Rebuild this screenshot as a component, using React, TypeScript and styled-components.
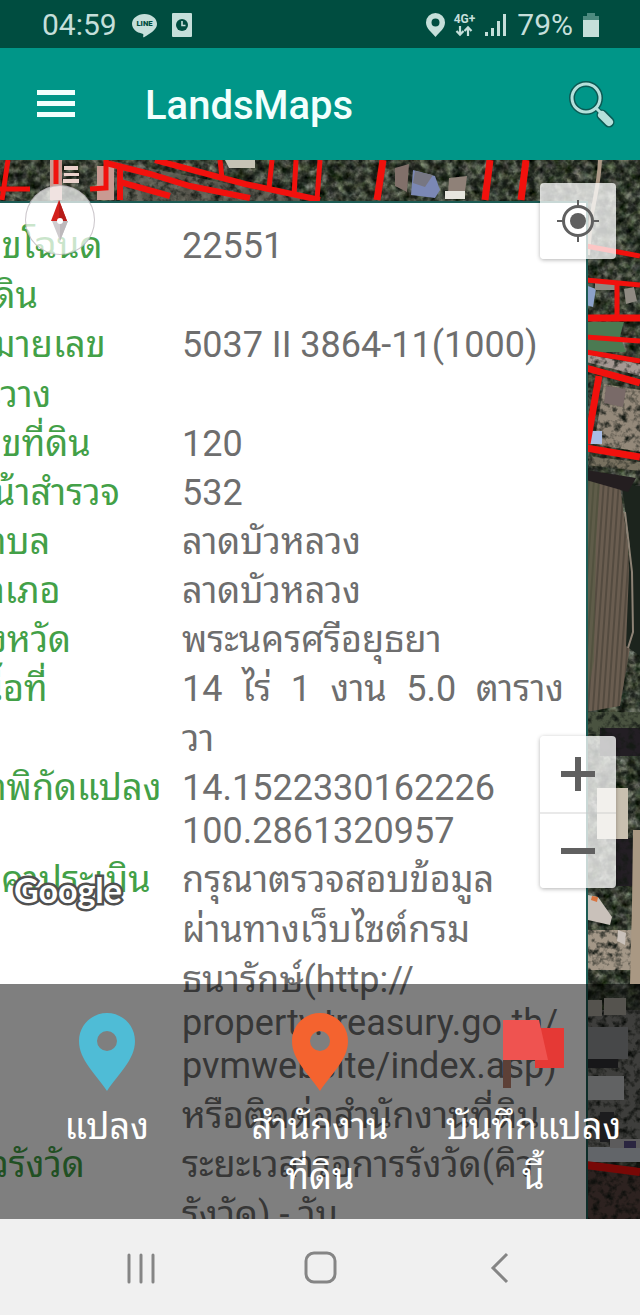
import React from 'react';
import styled, { createGlobalStyle } from 'styled-components';

const GlobalStyle = createGlobalStyle`
  *, *::before, *::after { box-sizing: border-box; }
  body {
    margin: 0;
    background: #f0f0f0;
    font-family: Roboto, 'Noto Sans Thai Looped', sans-serif;
  }
  button { font: inherit; color: inherit; border: 0; padding: 0; background: none; cursor: pointer; }
`;

const Screen = styled.div`
  display: flex;
  flex-direction: column;
  min-height: 100vh;
`;

/* ---------- status bar ---------- */

const StatusBar = styled.header`
  display: flex;
  align-items: center;
  justify-content: space-between;
  height: 48px;
  padding: 0 40px 0 42px;
  background: #004d40;
  color: #c5dfda;
  font-size: 30px;
  line-height: 48px;
`;

const StatusGroup = styled.div<{ $gap: number }>`
  display: flex;
  align-items: center;
  gap: ${({ $gap }) => $gap}px;
  padding-top: 2px;
`;

const StatusText = styled.span`
  line-height: 40px;
`;

const Network = styled.span`
  display: flex;
  flex-direction: column;
  align-items: center;
  font-size: 12px;
  line-height: 12px;
  font-weight: 700;
`;

/* ---------- toolbar ---------- */

const Toolbar = styled.div`
  display: flex;
  align-items: center;
  height: 112px;
  padding: 0 24px 0 36px;
  background: #009688;
  color: #f2fffd;
`;

const ToolbarButton = styled.button`
  display: flex;
  width: 48px;
  height: 48px;
  align-items: center;
`;

const Title = styled.h1`
  flex: 1;
  margin: 0;
  padding: 4px 0 0 61px;
  font-size: 40px;
  line-height: 48px;
  font-weight: 500;
`;

/* ---------- map ---------- */

const MapArea = styled.main`
  position: relative;
  flex: 1;
  overflow: hidden;
  background: #2e332b;
`;

const Satellite = styled.svg`
  position: absolute;
  inset: 0;
  width: 100%;
  height: 100%;
`;

const InfoPanel = styled.section`
  position: absolute;
  top: 41px;
  bottom: -40px;
  left: -33px;
  right: 52px;
  padding-top: 16px;
  overflow: hidden;
  background: #fff;
  border: 2px solid #1d5c55;
`;

const DetailTable = styled.table`
  width: 100%;
  border-collapse: collapse;
  table-layout: fixed;
  font-size: 36px;
  line-height: 43px;
`;

const Label = styled.th`
  width: 213px;
  padding: 0;
  vertical-align: top;
  text-align: left;
  font-weight: 400;
  color: #43a047;
`;

const Value = styled.td`
  padding: 0 22px 0 0;
  vertical-align: top;
  color: #6e6e6e;
`;

const Line = styled.span<{ $latin?: boolean; $justify?: boolean }>`
  display: block;
  padding-top: ${({ $latin }) => ($latin ? 0 : 7)}px;
  white-space: nowrap;
  text-align-last: ${({ $justify }) => ($justify ? 'justify' : 'left')};
  &:first-child { padding-top: 6px; }
`;

const Compass = styled.button`
  position: absolute;
  top: 25px;
  left: 25px;
  width: 70px;
  height: 70px;
  border: 1px solid rgba(150, 140, 150, 0.5);
  border-radius: 50%;
  background: rgba(255, 255, 255, 0.72);
  display: grid;
  place-items: center;
`;

const Watermark = styled.span`
  position: absolute;
  left: 14px;
  bottom: 309px;
  font: 700 34px/40px Lato, sans-serif;
  color: #fff;
  -webkit-text-stroke: 5px rgb(80, 80, 80);
  stroke-linejoin: round;
  paint-order: stroke fill;
`;

const ControlGroup = styled.div<{ $anchor: 'top' | 'bottom' }>`
  position: absolute;
  right: 24px;
  ${({ $anchor }) => ($anchor === 'top' ? 'top: 23px;' : 'bottom: 331px;')}
  display: flex;
  flex-direction: column;
  border-radius: 4px;
  background: rgba(255, 255, 255, 0.76);
  box-shadow: 0 1px 4px rgba(0, 0, 0, 0.3);
`;

const ControlButton = styled.button`
  display: grid;
  place-items: center;
  width: 76px;
  height: 76px;
  & + & { border-top: 2px solid rgba(200, 200, 200, 0.4); }
`;

const ActionBar = styled.nav`
  position: absolute;
  left: 0;
  right: 0;
  bottom: 0;
  display: grid;
  grid-template-columns: repeat(3, 1fr);
  height: 235px;
  background: rgba(0, 0, 0, 0.5);
`;

const Action = styled.button`
  display: flex;
  flex-direction: column;
  align-items: center;
  justify-content: flex-start;
  gap: 11px;
  padding-top: 29px;
  color: #fff;
  font-size: 36px;
  line-height: 50px;
  white-space: nowrap;
`;

/* ---------- system navigation ---------- */

const SystemNav = styled.footer`
  display: grid;
  grid-template-columns: repeat(3, 1fr);
  height: 96px;
  padding: 2px 52px 0;
  background: #f0f0f0;
`;

const SystemButton = styled.button`
  display: grid;
  place-items: center;
`;

type TextLine = { text: string; latin?: boolean; justify?: boolean };
type Detail = { label: string[]; value: TextLine[] };

const details: Detail[] = [
  { label: ['เลขโฉนด', 'ที่ดิน'], value: [{ text: '22551' }] },
  { label: ['หมายเลข', 'ระวาง'], value: [{ text: '5037 II 3864-11(1000)' }] },
  { label: ['เลขที่ดิน'], value: [{ text: '120' }] },
  { label: ['หน้าสำรวจ'], value: [{ text: '532' }] },
  { label: ['ตำบล'], value: [{ text: 'ลาดบัวหลวง' }] },
  { label: ['อำเภอ'], value: [{ text: 'ลาดบัวหลวง' }] },
  { label: ['จังหวัด'], value: [{ text: 'พระนครศรีอยุธยา' }] },
  { label: ['เนื้อที่'], value: [{ text: '14 ไร่ 1 งาน 5.0 ตาราง', justify: true }, { text: 'วา' }] },
  { label: ['ค่าพิกัดแปลง'], value: [{ text: '14.1522330162226' }, { text: '100.2861320957', latin: true }] },
  {
    label: ['ราคาประเมิน'],
    value: [
      { text: 'กรุณาตรวจสอบข้อมูล' },
      { text: 'ผ่านทางเว็บไซต์กรม' },
      { text: 'ธนารักษ์(http://' },
      { text: 'property.treasury.go.th/', latin: true },
      { text: 'pvmwebsite/index.asp)', latin: true },
      { text: 'หรือติดต่อสำนักงานที่ดิน' },
    ],
  },
  { label: ['คิวรังวัด'], value: [{ text: 'ระยะเวลารอการรังวัด(คิว' }, { text: 'รังวัด) - วัน' }] },
];

function SatelliteImage() {
  return (
    <Satellite viewBox="0 160 640 1059" preserveAspectRatio="xMaxYMin slice" aria-hidden="true">
      <defs>
        <filter id="ground" x="0" y="0" width="100%" height="100%" colorInterpolationFilters="sRGB">
          <feTurbulence type="fractalNoise" baseFrequency="0.11" numOctaves="3" seed="8" />
          <feColorMatrix values=".8 0 0 0 -.15  .78 .1 0 0 -.16  .75 0 .1 0 -.2  0 0 0 0 1" />
        </filter>
        <filter id="grain" x="0" y="0" width="100%" height="100%" colorInterpolationFilters="sRGB">
          <feTurbulence type="fractalNoise" baseFrequency="0.14" numOctaves="3" seed="21" />
          <feColorMatrix values="0 0 0 0 .08  0 0 0 0 .1  0 0 0 0 .08  2.6 0 0 0 -1.15" />
        </filter>
        <pattern id="furrows" width="5" height="8" patternUnits="userSpaceOnUse" patternTransform="rotate(4)">
          <rect width="5" height="8" fill="#6a5d50" />
          <rect width="2" height="8" fill="#544b40" />
        </pattern>
      </defs>
      <rect y="160" width="640" height="1059" filter="url(#ground)" />

      {/* open ground */}
      <path d="M108 160L300 198V202H120Z" fill="#6a655c" opacity=".7" />
      <path d="M586 354l54 10v12l-54-14z" fill="#a59893" />
      <path d="M604 384l36 6v62l-46-8z" fill="#94897a" />
      <path d="M586 456l54 6v9l-54-6z" fill="#77705f" />
      <path d="M586 712h54v22h-54z" fill="#4a5340" />
      <path d="M600 728h40v28h-40zM616 838h20v48h-20z" fill="#231e24" />
      <path d="M586 930h46v40h-46z" fill="#a39787" />
      <path d="M586 1010h54v140h-54z" fill="#7d7d78" />
      <path d="M586 1166h54v53h-54z" fill="#5a4540" />
      <rect x="0" y="160" width="640" height="1059" filter="url(#grain)" />

      {/* fields */}
      <path d="M586 322h38l-4 14 6 16h-40z" fill="#4b7a52" />
      <path d="M586 478l34 8 8 60 4 90-12 70-34 6z" fill="url(#furrows)" />
      <path d="M586 478l14 3-4 60-2 120-8 40z" fill="#4f5c3f" opacity=".4" />
      <path d="M622 486h18v170l-14-10 4-100z" fill="#1c241d" />
      <path d="M586 470l50 8-8 14-42-12z" fill="#241e20" />
      <path d="M625 512l7 60 1 60-5 16" fill="none" stroke="#8d8275" strokeWidth="2" />

      {/* roofs and roads */}
      <path d="M50 160h12v40H50zM97 166h17v34H97z" fill="#c99a92" />
      <path d="M64 166h14v4H64zM64 173h15v3H64zM63 179h16v4H63z" fill="#ead2cc" />
      <path d="M225 160h30v8h-26z" fill="#c6c3b5" />
      <path d="M395 168l14-4-2 28-12-6z" fill="#81706a" />
      <path d="M413 170l22 6 5 14-5 8-24-3z" fill="#7b88b5" />
      <path d="M415 171l18 4-8 12-12-4z" fill="#777783" />
      <path d="M449 178l18-2-2 16-17 2z" fill="#8f8178" />
      <path d="M445 191h20v8h-20z" fill="#e7e6df" />
      <path d="M600 160c-1 25-6 40-9 60l-3 35" fill="none" stroke="#ad9a87" strokeWidth="4" />
      <path d="M588 286l8 3-3 18-7-2z" fill="#8ca2ca" />
      <path d="M595 282h20v8h-20zM624 289l10-2 3 14-11 3z" fill="#8f8a82" />
      <path d="M606 386l20 3-3 18-19-4z" fill="#796a68" />
      <path d="M590 431h12v13h-12z" fill="#a9bde6" />
      <path d="M597 788h31v51h-31z" fill="#c9c0b0" />
      <path d="M633 830h7v154h-10l2-80z" fill="#a99883" />
      <path d="M588 895l10 2 14 20-2 8-22-5zM618 930l8 3-1 12-8-4z" fill="#c9c1ba" />
      <path d="M592 896l6 1-1 5-6-2z" fill="#d9743f" />
      <path d="M588 1000h14v16h-14zM604 998h22v17h-22z" fill="#aaa79c" />
      <path d="M588 1027h40v32h-40z" fill="#8f9092" />
      <path d="M588 1059h30v9h-30z" fill="#2e2e33" />
      <path d="M586 1076h38v24h-38z" fill="#c3c5c6" />
      <path d="M600 1112h14v30h-14z" fill="#39383c" />
      <path d="M586 1147h54v15h-54z" fill="#c5cbd2" />
      <path d="M610 1139h30v9h-30z" fill="#b9b6b8" />
      <path d="M624 1141h12v7h-12z" fill="#554a80" />

      {/* parcel boundaries */}
      <g fill="none" stroke="#f1110d" strokeWidth="5">
        <path d="M8 160l-6 40M0 189h30M56 160v24M90 189l16-1v-28" />
        <path d="M106 163L150 174L190 186L250 198M155 160l90 24 75 16M120 164v36M120 182l50 14" strokeWidth="6" />
        <path d="M220 160l2 18M272 160l-3 28M296 160l-2 36M320 160l-3 40" />
        <path d="M383 160l-6 40M490 160l-5 40M526 160l-5 40" strokeWidth="7" />
        <path d="M586 246l54 10M586 280l54 5M617 281v36M586 337l54 4M586 352l54 9" />
        <path d="M586 318h54M586 368l54 15M599 376l-12 68M586 448l54 9" strokeWidth="7" />
        <path d="M586 1165l54 7" strokeWidth="8" />
      </g>
    </Satellite>
  );
}

function LineIcon() {
  return (
    <svg width="25" height="25" viewBox="0 0 26 26" aria-label="LINE">
      <path fill="#c5dfda" d="M13 1C5.800 1 0 5.600 0 11.300c0 5.100 4.600 9.400 10.900 10.200.9.200 1 .6.9 1.500l-.2 1.600c0 .6.300.9.900.6 3-1.600 8.500-4.800 11.200-8.200C25.300 15.300 26 13.400 26 11.300 26 5.600 20.200 1 13 1z" />
      <text x="13" y="14" textAnchor="middle" fontSize="8" fontWeight="900" fontFamily="Roboto, sans-serif" fill="#004d40">LINE</text>
    </svg>
  );
}

function Pin({ color }: { color: string }) {
  return (
    <svg width="62" height="78" viewBox="0 0 62 78" aria-hidden="true">
      <path fill={color} fillRule="evenodd" d="M31 0C15.500 0 3 12.500 3 28c0 19 17 33 28 50 11-17 28-31 28-50C59 12.500 46.500 0 31 0zm0 18a10 10 0 1 1 0 20 10 10 0 0 1 0-20z" />
    </svg>
  );
}

export default function App() {
  return (
    <Screen>
      <GlobalStyle />
      <StatusBar>
        <StatusGroup $gap={15}>
          <StatusText>04:59</StatusText>
          <LineIcon />
          <svg width="20" height="24" viewBox="0 0 20 24" aria-hidden="true">
            <rect width="20" height="24" rx="1" fill="#c5dfda" />
            <circle cx="10" cy="12" r="6" fill="#004d40" />
            <path d="M10 8v4.500h3.500" fill="none" stroke="#c5dfda" strokeWidth="1.600" />
          </svg>
        </StatusGroup>
        <StatusGroup $gap={9}>
          <svg width="19" height="24" viewBox="0 0 19 24" aria-hidden="true">
            <path fill="#c5dfda" fillRule="evenodd" d="M9.500 0A9.500 9.500 0 0 0 0 9.500C0 15.500 5 18.500 9.500 24 14 18.500 19 15.500 19 9.500A9.500 9.500 0 0 0 9.500 0zm0 5.500a4 4 0 1 1 0 8 4 4 0 0 1 0-8z" />
          </svg>
          <Network>
            4G+
            <svg width="18" height="12" viewBox="0 0 18 12" fill="none" stroke="#c5dfda" strokeWidth="2.200" aria-hidden="true">
              <path d="M5 1v8M1.500 6L5 9.700 8.500 6M13 11V3M9.500 6L13 2.300 16.500 6" />
            </svg>
          </Network>
          <svg width="24" height="24" viewBox="0 0 24 24" fill="#c5dfda" aria-hidden="true">
            <path d="M1 19h3v4H1zM7 15h3v8H7zM13 8h3v15h-3zM19 1h3v22h-3z" />
          </svg>
          <StatusText>79%</StatusText>
          <svg width="18" height="24" viewBox="0 0 18 24" aria-hidden="true">
            <path fill="#4d8a7f" d="M5 0h8v3h4v5H1V3h4z" />
            <path fill="#c5dfda" d="M1 7h16v17H1z" />
          </svg>
        </StatusGroup>
      </StatusBar>

      <Toolbar>
        <ToolbarButton aria-label="Menu">
          <svg width="40" height="28" viewBox="0 0 40 28" fill="currentColor" aria-hidden="true">
            <path d="M1 0h38v5H1zM1 11h38v5H1zM1 22h38v5H1z" />
          </svg>
        </ToolbarButton>
        <Title>LandsMaps</Title>
        <ToolbarButton aria-label="Search">
          <svg width="48" height="48" viewBox="0 0 48 48" fill="none" aria-hidden="true">
            <g stroke="#0b5a54" strokeLinecap="round">
              <circle cx="18" cy="18" r="14" strokeWidth="6" />
              <path d="M28 28l5 5" strokeWidth="5" />
              <path d="M34 35l7 7" strokeWidth="11" />
            </g>
            <g stroke="#b5e0db" strokeLinecap="round">
              <circle cx="18" cy="18" r="14" strokeWidth="3" />
              <path d="M28 28l5 5" strokeWidth="3" />
              <path d="M34 35l7 7" strokeWidth="8" />
            </g>
          </svg>
        </ToolbarButton>
      </Toolbar>

      <MapArea>
        <SatelliteImage />
        <InfoPanel>
          <DetailTable>
            <tbody>
              {details.map((row) => (
                <tr key={row.label[0]}>
                  <Label scope="row">
                    {row.label.map((text) => (
                      <Line key={text}>{text}</Line>
                    ))}
                  </Label>
                  <Value>
                    {row.value.map((line) => (
                      <Line key={line.text} $latin={line.latin} $justify={line.justify}>
                        {line.text}
                      </Line>
                    ))}
                  </Value>
                </tr>
              ))}
            </tbody>
          </DetailTable>
        </InfoPanel>

        <Compass aria-label="Compass">
          <svg width="20" height="44" viewBox="0 0 20 44" aria-hidden="true">
            <path d="M9 2L1 23h16z" fill="#d3201c" />
            <path d="M9 2v21h8z" fill="#b51b18" />
            <path d="M2 23h16l-8 20z" fill="#cfcbce" />
            <path d="M10 23h8l-8 20z" fill="#bdb9bc" />
            <circle cx="10" cy="23" r="3" fill="#fff" />
          </svg>
        </Compass>

        <ControlGroup $anchor="top">
          <ControlButton aria-label="My location">
            <svg width="42" height="42" viewBox="0 0 42 42" fill="none" stroke="#606060" aria-hidden="true">
              <circle cx="21" cy="21" r="14.500" strokeWidth="3" />
              <circle cx="21" cy="21" r="8" fill="#606060" stroke="none" />
              <path d="M21 0v7M21 35v7M0 21h7M35 21h7" strokeWidth="2" />
            </svg>
          </ControlButton>
        </ControlGroup>

        <ControlGroup $anchor="bottom">
          <ControlButton aria-label="Zoom in">
            <svg width="34" height="34" viewBox="0 0 34 34" fill="#606060" aria-hidden="true">
              <path d="M14 0h6v14h14v6H20v14h-6V20H0v-6h14z" />
            </svg>
          </ControlButton>
          <ControlButton aria-label="Zoom out">
            <svg width="34" height="6" viewBox="0 0 34 6" aria-hidden="true">
              <path d="M0 0h34v6H0z" fill="#606060" />
            </svg>
          </ControlButton>
        </ControlGroup>

        <Watermark>Google</Watermark>

        <ActionBar>
          <Action>
            <Pin color="#4fbcd6" />
            <span>แปลง</span>
          </Action>
          <Action>
            <Pin color="#f4632f" />
            <span>สำนักงาน<br />ที่ดิน</span>
          </Action>
          <Action>
            <svg width="62" height="78" viewBox="0 0 62 78" aria-hidden="true">
              <path fill="#5d4037" d="M1 8h8v67H1z" />
              <path fill="#e53935" d="M33 15h29v40H33z" />
              <path fill="#ef5350" d="M1 7h36l9 40H1z" />
            </svg>
            <span>บันทึกแปลง<br />นี้</span>
          </Action>
        </ActionBar>
      </MapArea>

      <SystemNav>
        <SystemButton aria-label="Recent apps">
          <svg width="32" height="32" viewBox="0 0 32 32" stroke="#858585" strokeWidth="3" strokeLinecap="round" aria-hidden="true">
            <path d="M4 3v27M16 3v27M28 3v27" />
          </svg>
        </SystemButton>
        <SystemButton aria-label="Home">
          <svg width="34" height="34" viewBox="0 0 34 34" fill="none" stroke="#858585" strokeWidth="3" aria-hidden="true">
            <rect x="3" y="2" width="29" height="29" rx="8" />
          </svg>
        </SystemButton>
        <SystemButton aria-label="Back">
          <svg width="32" height="32" viewBox="0 0 32 32" fill="none" stroke="#858585" strokeWidth="3" aria-hidden="true">
            <path d="M24 2L10 16l14 14" />
          </svg>
        </SystemButton>
      </SystemNav>
    </Screen>
  );
}
